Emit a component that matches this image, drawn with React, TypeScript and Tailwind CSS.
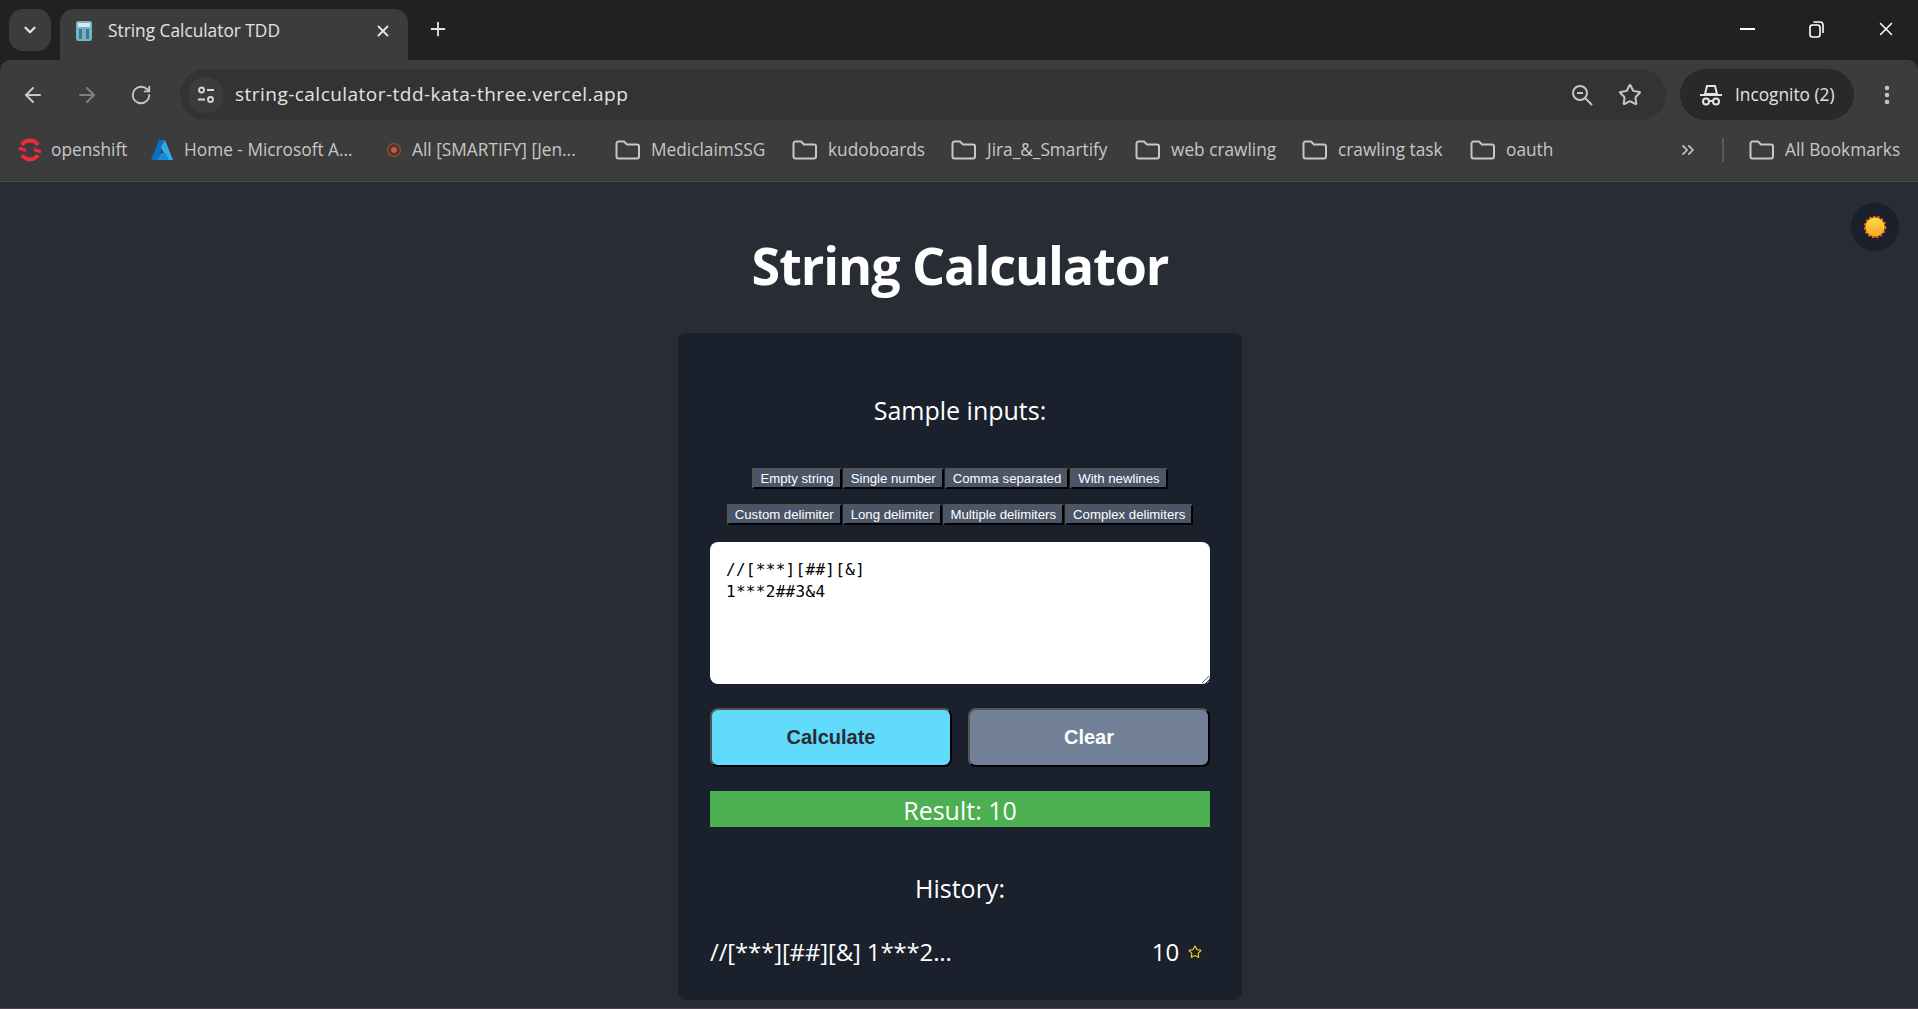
import { ArrowLeft, ArrowRight, ChevronDown, ChevronsRight, EllipsisVertical, Plus, RotateCw, Star, X } from 'lucide-react';

const UI_FONT = "font-['Open_Sans','Noto_Sans',sans-serif]";

const row1 = ['Empty string', 'Single number', 'Comma separated', 'With newlines'];
const row2 = ['Custom delimiter', 'Long delimiter', 'Multiple delimiters', 'Complex delimiters'];

function FolderIcon() {
  return (
    <svg width="25" height="20" viewBox="0 0 25 20" fill="none" stroke="#c7c7c7" strokeWidth="2" className="shrink-0">
      <path d="M1.500 3.500a2 2 0 0 1 2-2h5.500l3 3h10a2 2 0 0 1 2 2v10a2 2 0 0 1-2 2h-18.500a2 2 0 0 1-2-2z" />
    </svg>
  );
}

function Bookmark({ label, width, icon }: { label: string; width: string; icon?: React.ReactNode }) {
  return (
    <div className={`flex items-center gap-[11px] ${width}`}>
      {icon ?? <FolderIcon />}
      <span className="whitespace-nowrap text-[17.3px] text-[#c7c7c7]">{label}</span>
    </div>
  );
}

function Browser() {
  return (
    <div className={`${UI_FONT} shrink-0 bg-[#202221]`}>
      {/* tab strip */}
      <div className="flex h-[60px] items-start pl-[9px] pt-[9px]">
        <button className="flex h-[42px] w-[42px] items-center justify-center rounded-[14px] bg-[#3c3c3c]">
          <ChevronDown size={18} strokeWidth={3} color="#e3e3e3" />
        </button>
        <div className="ml-[9px] flex h-[51px] w-[348px] items-center rounded-t-[14px] bg-[#3c3c3c] pb-[7px] pl-[16px] pr-[16px]">
          <svg width="16" height="20" viewBox="0 0 16 20" className="shrink-0">
            <rect width="16" height="20" rx="2" fill="#6fb6cc" />
            <rect x="2" y="2" width="12" height="4" fill="#dfe7ea" />
            <rect x="3" y="8" width="3" height="10" fill="#2f7f93" />
            <rect x="7" y="8" width="2" height="10" fill="#b68fb0" />
            <rect x="10" y="8" width="3" height="10" fill="#2f7f93" />
          </svg>
          <span className="ml-[16px] whitespace-nowrap text-[17.3px] text-[#e3e3e3]">String Calculator TDD</span>
          <X size={18} strokeWidth={2.5} color="#e3e3e3" className="ml-auto" />
        </div>
        <Plus size={22} strokeWidth={2} color="#e3e3e3" className="ml-[19px] mt-[9px]" />
        <div className="ml-auto flex items-center pr-[21px] pt-[9px] text-white">
          <div className="h-[2px] w-[15px] bg-white" />
          <svg width="16" height="18" viewBox="0 0 16 18" fill="none" stroke="white" strokeWidth="1.6" className="ml-[54px]">
            <rect x="1" y="5" width="10" height="12" rx="2.500" />
            <path d="M4.500 2h6.500a3 3 0 0 1 3 3v8" />
          </svg>
          <X size={22} strokeWidth={1.6} color="white" className="ml-[50px]" />
        </div>
      </div>
      {/* toolbar */}
      <div className="rounded-t-[10px] border-b border-b-[#4c4c4c] bg-[#3c3c3c]">
        <div className="flex h-[69px] items-start pt-[9px]">
          <div className="ml-[21px] mt-[14px] flex items-center">
            <ArrowLeft size={24} strokeWidth={2} color="#c7c7c7" />
            <ArrowRight size={24} strokeWidth={2} color="#7f7f7f" className="ml-[30px]" />
            <RotateCw size={22} strokeWidth={2} color="#c7c7c7" className="ml-[31px]" />
          </div>
          <div className="ml-[28px] flex h-[51px] w-[1486px] items-center rounded-full bg-[#333333] pl-[8px] pr-[24px]">
            <div className="flex h-[36px] w-[36px] items-center justify-center rounded-full bg-[#3c3c3c]">
              <svg width="18" height="18" viewBox="0 0 18 18" fill="none" stroke="#d8d8d8" strokeWidth="1.800">
                <circle cx="4.500" cy="4" r="2.500" />
                <path d="M10 4h7M1 13.500h7" />
                <circle cx="13.500" cy="13.500" r="2.500" />
              </svg>
            </div>
            <span className="ml-[11px] whitespace-nowrap text-[19px] tracking-[0.47px] text-[#e3e3e3]">string-calculator-tdd-kata-three.vercel.app</span>
            <svg width="24" height="24" viewBox="0 0 24 24" fill="none" stroke="#c7c7c7" strokeWidth="2" className="ml-auto">
              <circle cx="10" cy="10" r="7" />
              <path d="M15.500 15.500 22 22M7 10h6" />
            </svg>
            <Star size={24} strokeWidth={2} color="#c7c7c7" className="ml-[24px]" />
          </div>
          <div className="ml-[14px] flex h-[51px] w-[174px] items-center rounded-full bg-[#292929] pl-[19px]">
            <svg width="24" height="24" viewBox="0 0 24 24" fill="none" stroke="#e3e3e3" strokeWidth="2">
              <path d="M8 3h8l2 8H6zM1 12h22" />
              <circle cx="7" cy="18.500" r="3" />
              <circle cx="17" cy="18.500" r="3" />
              <path d="M10 18h4" />
            </svg>
            <span className="ml-[12px] whitespace-nowrap text-[17.3px] text-[#e3e3e3]">Incognito (2)</span>
          </div>
          <EllipsisVertical size={24} strokeWidth={2.500} color="#c7c7c7" className="ml-[21px] mt-[14px]" />
        </div>
        {/* bookmarks */}
        <div className="flex h-[52px] items-center pb-[10px] pl-[18px] pr-[1px]">
          <Bookmark
            label="openshift"
            width="w-[133px]"
            icon={
              <svg width="24" height="24" viewBox="0 0 24 24" fill="none" className="mr-[-2px] shrink-0">
                <path d="M20 7A9.500 9.500 0 0 0 4 7" stroke="#ee2a3c" strokeWidth="4" />
                <path d="M4 17a9.500 9.500 0 0 0 16 0" stroke="#ee2a3c" strokeWidth="4" />
                <path d="M1 10l7 2.500M16 11.500l7 2.500" stroke="#ee2a3c" strokeWidth="3" />
              </svg>
            }
          />
          <Bookmark
            label="Home - Microsoft A..."
            width="w-[235px]"
            icon={
              <svg width="22" height="22" viewBox="0 0 22 22" className="shrink-0">
                <path d="M8 1h6L7 21H0z" fill="#0f6cc4" />
                <path d="M14 1l8 20h-6L10 8z" fill="#36a9e8" />
                <path d="M10 14h5l3 7H6z" fill="#1a8bd8" />
              </svg>
            }
          />
          <Bookmark
            label="All [SMARTIFY] [Jen..."
            width="w-[229px]"
            icon={
              <svg width="16" height="16" viewBox="0 0 16 16" fill="none" className="mr-[-1px] shrink-0">
                <circle cx="8" cy="8" r="6.500" stroke="#8a4a38" strokeWidth="1.500" />
                <circle cx="8" cy="8" r="3" fill="#e0541f" />
              </svg>
            }
          />
          <Bookmark label="MediclaimSSG" width="w-[177px]" />
          <Bookmark label="kudoboards" width="w-[159px]" />
          <Bookmark label="Jira_&_Smartify" width="w-[184px]" />
          <Bookmark label="web crawling" width="w-[167px]" />
          <Bookmark label="crawling task" width="w-[168px]" />
          <Bookmark label="oauth" width="w-[120px]" />
          <ChevronsRight size={20} strokeWidth={2} color="#c7c7c7" className="ml-auto" />
          <div className="ml-[24px] h-[24px] w-[2px] bg-[#5a5a5a]" />
          <div className="ml-[25px]">
            <Bookmark label="All Bookmarks" width="w-[168px]" />
          </div>
        </div>
      </div>
    </div>
  );
}

function SunButton() {
  return (
    <button className="absolute right-[19px] top-[21px] flex h-[48px] w-[48px] items-center justify-center rounded-full bg-[#1a202c]">
      <svg width="24" height="24" viewBox="0 0 24 24">
        <defs>
          <linearGradient id="sunFill" x1="0" y1="0" x2="0" y2="1">
            <stop offset="0" stopColor="#fde047" />
            <stop offset="1" stopColor="#f5a623" />
          </linearGradient>
        </defs>
        <circle cx="12" cy="12" r="10.500" fill="none" stroke="#f97316" strokeWidth="1.500" strokeDasharray="2.200 2.100" />
        <circle cx="12" cy="12" r="10" fill="#f97316" />
        <circle cx="12" cy="12" r="9.300" fill="url(#sunFill)" />
      </svg>
    </button>
  );
}

function SampleRow({ items }: { items: string[] }) {
  return (
    <div className="flex justify-center gap-[1px]">
      {items.map((item) => (
        <button
          key={item}
          className="border-2 border-black bg-[#4a5568] px-[6px] py-[1px] font-['Liberation_Sans',sans-serif] text-[13.2px] leading-[15px] whitespace-nowrap text-white [border-style:outset]"
        >
          {item}
        </button>
      ))}
    </div>
  );
}

export default function App() {
  return (
    <div className="flex h-screen flex-col overflow-hidden border-b border-b-[#4d4250] bg-[#282c34]">
      <Browser />
      <main className={`${UI_FONT} relative flex flex-1 flex-col items-center pl-[2px] text-white`}>
        <SunButton />
        <h1 className="mt-[47px] text-[52px] leading-[72px] font-bold tracking-[-1.05px]">String Calculator</h1>
        <section className="mt-[32px] w-[564px] rounded-[8px] bg-[#1a202c] px-[32px] pb-[32px] pt-[61px]">
          <h3 className="text-center text-[25px] leading-[32px]">Sample inputs:</h3>
          <div className="mt-[42px] flex flex-col gap-[15px]">
            <SampleRow items={row1} />
            <SampleRow items={row2} />
          </div>
          <textarea
            readOnly
            value={'//[***][##][&]\n1***2##3&4'}
            className="mt-[17px] block h-[142px] w-full rounded-[8px] bg-white px-[16px] pb-[15px] pt-[17px] font-['DejaVu_Sans_Mono',monospace] text-[16px] leading-[22px] tracking-[0.3px] text-black"
          />
          <div className="mt-[24px] flex gap-[16px]">
            <button className="h-[59px] flex-1 rounded-[8px] border-2 border-black bg-[#61dafb] pb-[2px] font-['Liberation_Sans',sans-serif] text-[20px] font-bold text-[#282c34] [border-style:outset]">
              Calculate
            </button>
            <button className="h-[59px] flex-1 rounded-[8px] border-2 border-black bg-[#718096] pb-[2px] font-['Liberation_Sans',sans-serif] text-[20px] font-bold text-white [border-style:outset]">
              Clear
            </button>
          </div>
          <div className="mt-[24px] h-[36px] bg-[#4caf50] text-center text-[25px] leading-[38px]">Result: 10</div>
          <h3 className="mt-[45px] text-center text-[25px] leading-[32px]">History:</h3>
          <div className="mt-[32px] flex items-center justify-between text-[24px] leading-[32px] tracking-[-0.15px]">
            <span>//[***][##][&amp;] 1***2...</span>
            <span className="flex items-center">
              10
              <Star size={14} strokeWidth={2} color="#facc15" className="ml-[9px] mr-[8px]" />
            </span>
          </div>
        </section>
      </main>
    </div>
  );
}
